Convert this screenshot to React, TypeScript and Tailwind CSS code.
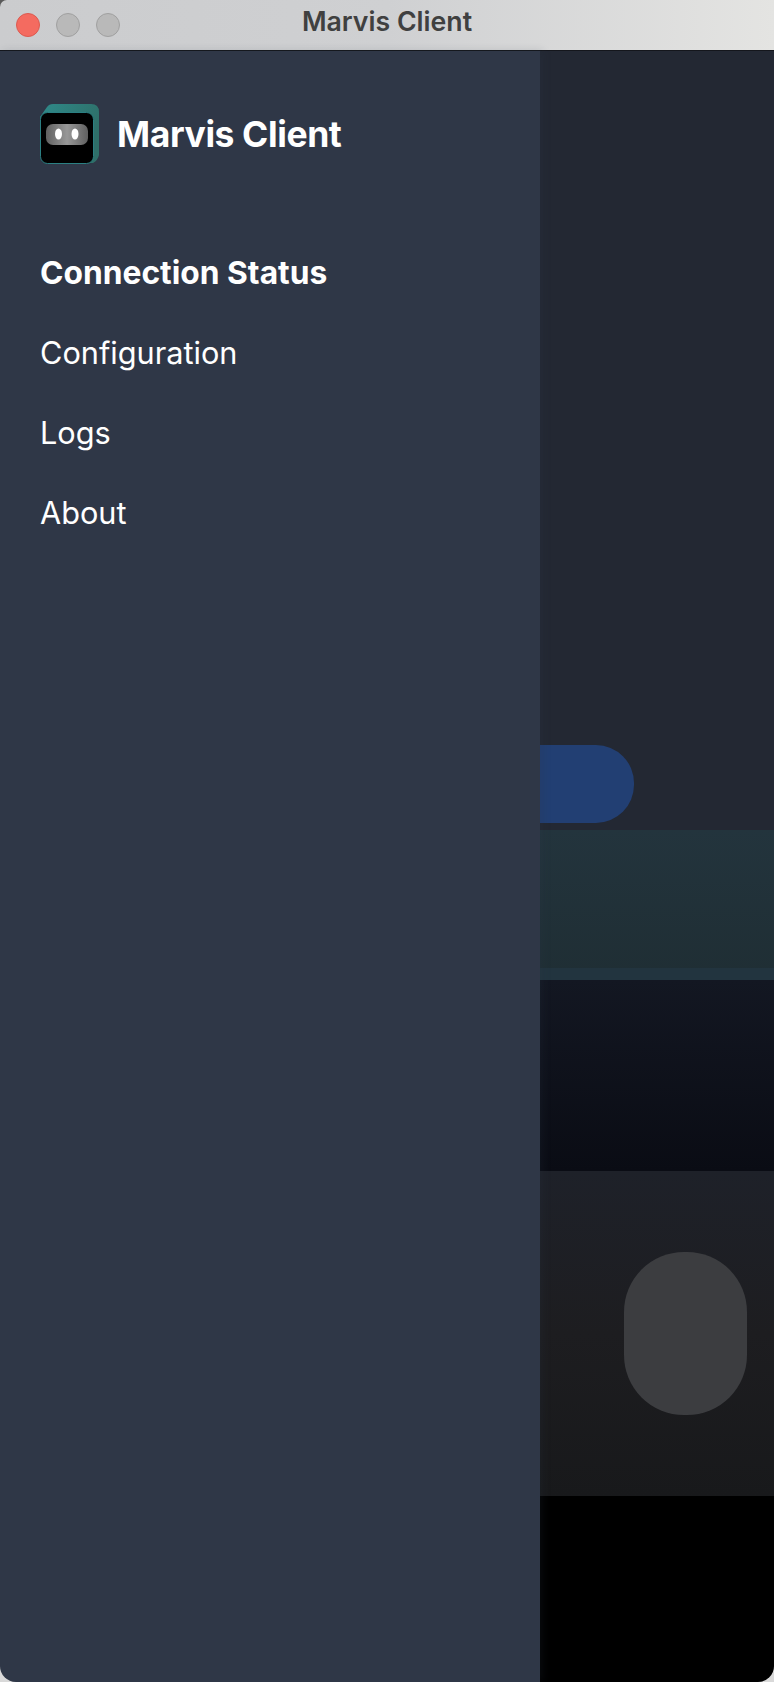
const navItems = [
  { label: "Connection Status", active: true },
  { label: "Configuration", active: false },
  { label: "Logs", active: false },
  { label: "About", active: false },
];

function Logo() {
  return (
    <svg width="60" height="62" viewBox="10 8 60 62" className="shrink-0">
      <defs>
        <linearGradient id="side" x1="0" y1="0" x2="1" y2="0.4">
          <stop offset="0" stopColor="#2f8a8a" />
          <stop offset="0.6" stopColor="#2e7a76" />
          <stop offset="1" stopColor="#2f6f69" />
        </linearGradient>
        <linearGradient id="visor" x1="0" y1="0" x2="1" y2="0">
          <stop offset="0" stopColor="#606060" />
          <stop offset="0.5" stopColor="#989898" />
          <stop offset="1" stopColor="#606060" />
        </linearGradient>
      </defs>
      <path
        d="M10 22 L17 12 Q19 9 23 9 L61 9 Q69 9 69 17 L69 60 Q68 65 63 68 L20 68 Z"
        fill="url(#side)"
      />
      <rect x="10.5" y="17.5" width="53" height="51" rx="7" fill="#000" stroke="#2b7f82" strokeWidth="1" />
      <rect x="16" y="29" width="42" height="21" rx="7" fill="url(#visor)" />
      <ellipse cx="28.5" cy="39" rx="3.5" ry="5.5" fill="#fff" />
      <ellipse cx="45" cy="39" rx="3.5" ry="5.5" fill="#fff" />
    </svg>
  );
}

export default function App() {
  return (
    <div className="h-[1682px] w-[774px] bg-gradient-to-b from-[#5a5a5a] from-[8px] to-[#d9d9d9] to-[8px] font-['Inter',sans-serif]">
      <div className="flex h-full flex-col overflow-hidden rounded-tl-[7px] rounded-b-[16px]">
        <header className="relative flex h-[51px] shrink-0 items-center gap-4 border-b border-[#14161c] bg-gradient-to-r from-[#cbccce] via-[#cfd0d2] to-[#e4e4e2] pl-4">
          <span className="h-6 w-6 rounded-full border border-[#dc5a50] bg-[#f46b60]" />
          <span className="h-6 w-6 rounded-full border border-[#a0a0a0] bg-[#b9b9b9]" />
          <span className="h-6 w-6 rounded-full border border-[#a0a0a0] bg-[#b9b9b9]" />
          <span className="absolute inset-x-0 top-[8px] text-center text-[26.7px] leading-none font-semibold text-[#404040]">
            Marvis Client
          </span>
        </header>

        <div className="flex min-h-0 flex-1">
          <aside className="relative z-10 w-[540px] shrink-0 bg-[#2f3747] pl-[40px] shadow-[3px_0_8px_rgba(47,55,71,0.18)]">
            <div className="mt-[52px] flex items-center gap-[17px]">
              <Logo />
              <span className="mt-0.5 text-[35.5px] leading-none font-bold tracking-[-0.4px] text-white">
                Marvis Client
              </span>
            </div>
            <nav className="mt-[68px] flex flex-col">
              {navItems.map((item) => (
                <a
                  key={item.label}
                  className={`flex h-[80px] items-center text-white ${
                    item.active ? "text-[31.75px] font-bold" : "text-[30.7px] font-normal"
                  }`}
                >
                  {item.label}
                </a>
              ))}
            </nav>
          </aside>

          <main className="flex min-w-0 flex-1 flex-col">
            <section className="flex h-[779px] shrink-0 items-end bg-[#232833] pb-[7px]">
              <div className="h-[78px] w-[94px] rounded-r-[38px] bg-[#223f73]" />
            </section>
            <section className="flex h-[150px] shrink-0 flex-col justify-end bg-gradient-to-b from-[#23343d] to-[#1f2e34]">
              <div className="h-3 bg-[#22343f]" />
            </section>
            <section className="h-[191px] shrink-0 bg-gradient-to-b from-[#131722] to-[#0a0c14]" />
            <section className="flex h-[325px] shrink-0 items-center bg-gradient-to-b from-[#1e2129] via-[#1d1d20] to-[#18191b] pl-[84px]">
              <div className="h-[163px] w-[123px] rounded-[60px] bg-[#3c3d40]" />
            </section>
            <section className="flex-1 bg-black" />
          </main>
        </div>
      </div>
    </div>
  );
}
